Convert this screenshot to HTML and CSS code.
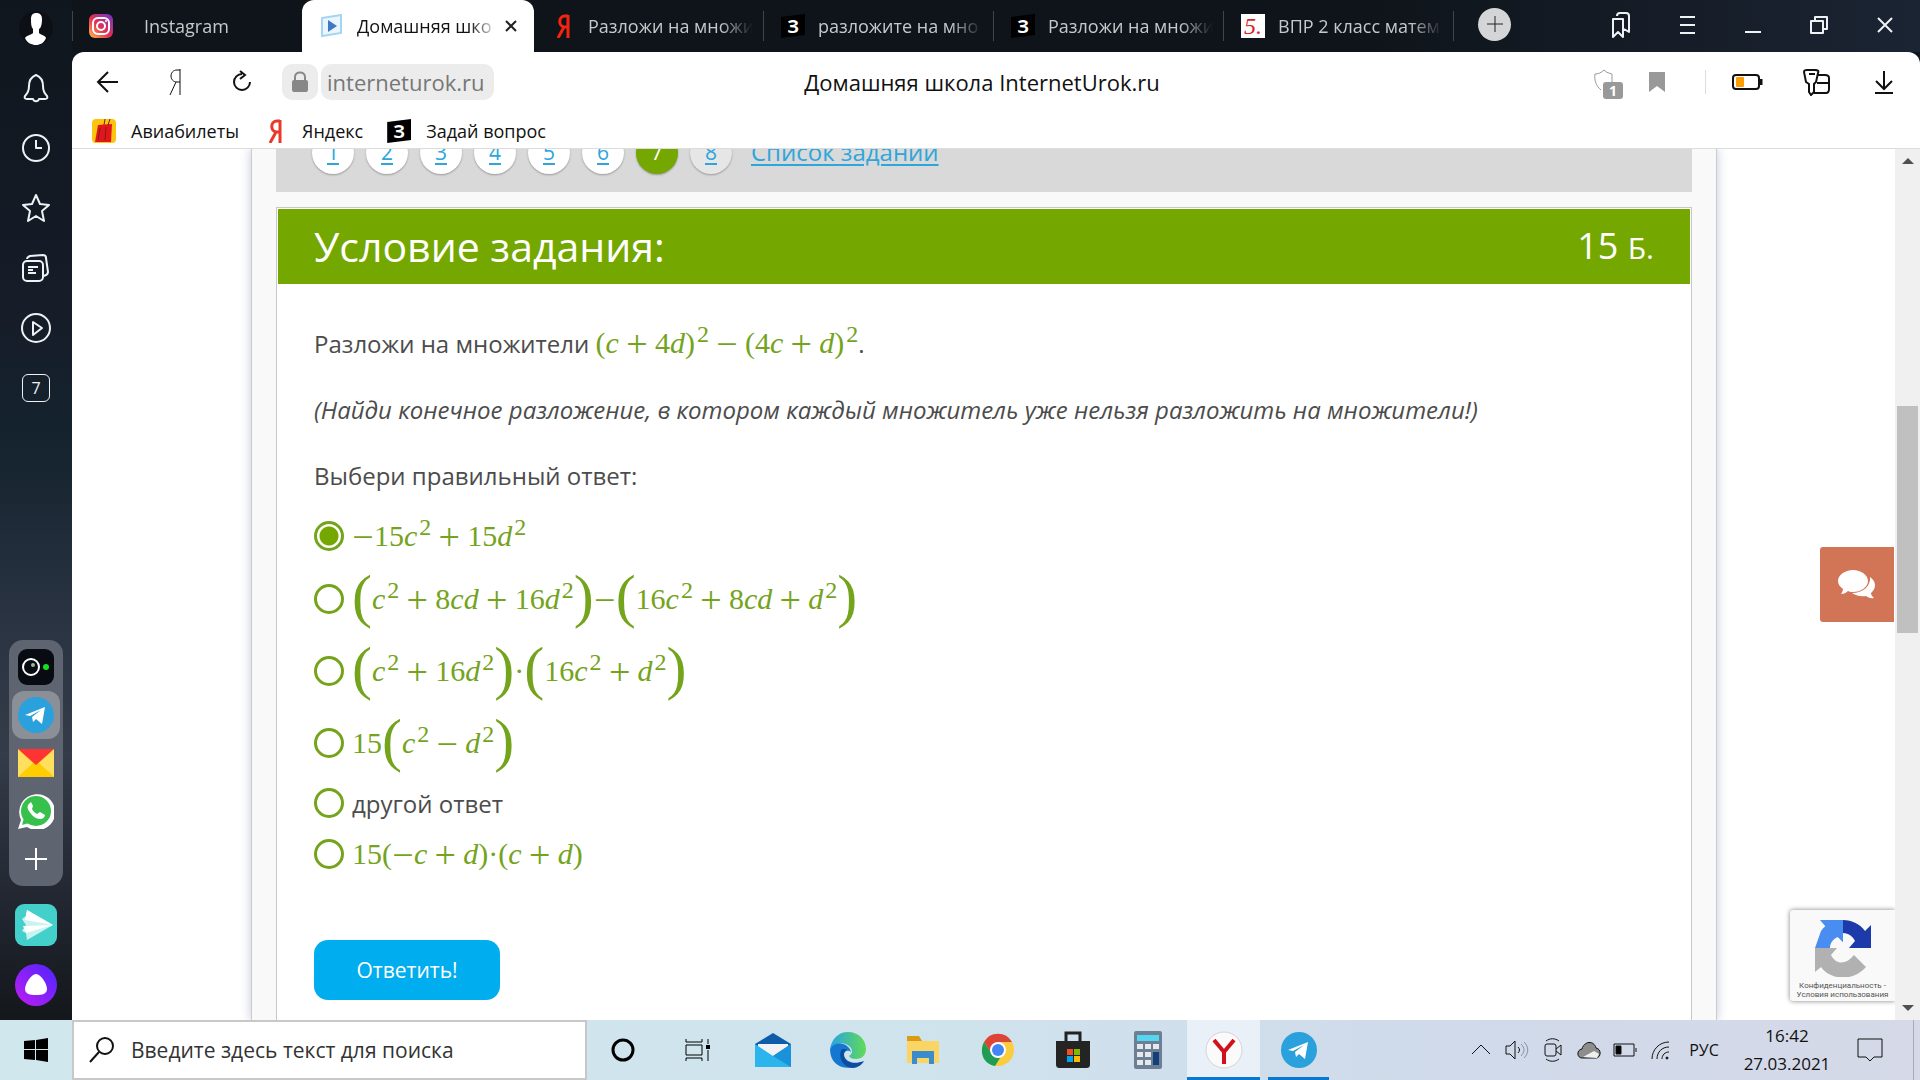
FILE: index.html
```
<!DOCTYPE html>
<html lang="ru">
<head>
  <meta charset="UTF-8" />
  <title>Домашняя школа InternetUrok.ru</title>
  <link rel="stylesheet" href="styles.css">
</head>
<body>
  <aside class="sidebar">
    <nav class="side-nav">
      <button aria-label="Профиль"><svg width="36" height="36" viewBox="0 0 36 36"><circle cx="18" cy="18" r="17" fill="#0c1015"/><path d="M13 9c0-4 2-6 5-6s6 1 6 6c0 5-1 9-3 10v4c2 2 6 2 7 5-2 5-6 7-10 7s-9-2-11-7c2-3 6-3 8-5v-4c-2-2-2-6-2-10z" fill="#fff"/></svg></button>
      <button aria-label="Уведомления"><svg class="line" width="32" height="32" viewBox="0 0 32 32"><path d="M16 3c-5 2-7 6-7 11 0 5-2 8-4 10-1 2 0 3 2 3h6c1 3 5 3 6 0h6c2 0 3-1 2-3-2-2-4-5-4-10 0-5-2-9-7-11z"/></svg></button>
      <button aria-label="История"><svg class="line" width="32" height="32" viewBox="0 0 32 32"><circle cx="16" cy="16" r="13"/><path d="M16 8v8h6"/></svg></button>
      <button aria-label="Избранное"><svg class="line" width="32" height="32" viewBox="0 0 32 32"><path d="M16 3l4 9 9 1-7 6 2 10-8-5-8 5 2-10-7-6 9-1z"/></svg></button>
      <button aria-label="Коллекции"><svg class="line" width="32" height="32" viewBox="0 0 32 32"><rect x="3" y="9" width="20" height="20" rx="4"/><path d="M7 7c0-2 1-2 3-3l13-1c2 0 3 1 3 3l2 14c0 2-1 3-4 4M8 15h10M8 18h5M8 21h8"/></svg></button>
      <button aria-label="Видео"><svg class="line" width="32" height="32" viewBox="0 0 32 32"><circle cx="16" cy="16" r="14"/><path d="M13 10v13l9-7z"/></svg></button>
      <button class="tab-count">7</button>
    </nav>
    <div class="apps">
      <button aria-label="Камера"><svg width="36" height="36" viewBox="0 0 36 36"><rect width="36" height="36" rx="9" fill="#080c12"/><circle cx="13" cy="18" r="8" fill="none" stroke="#fff" stroke-width="2"/><circle cx="15" cy="16" r="2" fill="#9bb893"/><circle cx="28" cy="18" r="3" fill="#12e21c"/></svg></button>
      <button class="current" aria-label="Telegram"><svg width="36" height="36" viewBox="0 0 36 36"><circle cx="18" cy="18" r="18" fill="#2aa1dc"/><path d="M7 18l20-8-3 17-6-5-3 3-1-5 9-7-11 6z" fill="#fff"/></svg></button>
      <button aria-label="Почта"><svg width="36" height="28" viewBox="0 0 36 28"><path d="M0 0h36v28H0z" fill="#fc0"/><path d="M0 0v28l15-14zM36 0v28L21 14z" fill="#ffdf5e"/><path d="M0 0h36L18 16z" fill="#f33"/></svg></button>
      <button aria-label="WhatsApp"><svg width="36" height="36" viewBox="0 0 36 36"><path d="M0 36l3-9A18 18 0 1 1 9 34z" fill="#fff"/><circle cx="18" cy="18" r="15" fill="#38c04c"/><path d="M4 32l2-7 5 5z" fill="#38c04c"/><path d="M12 10c-3 2-3 5-1 8 3 5 7 8 11 8 3 0 5-2 5-4l-5-3-3 2c-2-1-4-3-5-5l1-3-2-4z" fill="#fff"/></svg></button>
      <button aria-label="Добавить"><svg width="24" height="24" viewBox="0 0 24 24"><path d="M12 1v22M1 12h22" stroke="#fff" stroke-width="2"/></svg></button>
    </div>
    <button aria-label="Турбо"><svg width="42" height="42" viewBox="0 0 42 42"><rect width="42" height="42" rx="9" fill="#43d0cb"/><path d="M12 6l26 15-26 15-1-7-4-2 4-6-4-6 4-3z" fill="#c9f3f1"/><path d="M12 6l26 15-28-5zM8 22l30-1-27 8z" fill="#fff"/></svg></button>
    <button aria-label="Алиса"><svg width="42" height="42" viewBox="0 0 42 42"><defs><linearGradient id="alice" x1="0" y1="1" x2="1" y2="0"><stop offset="0" stop-color="#c01df0"/><stop offset="1" stop-color="#4a26ff"/></linearGradient></defs><circle cx="21" cy="21" r="21" fill="url(#alice)"/><path d="M21 10c5 0 11 10 11 15s-5 6-11 6-11-1-11-6 6-15 11-15z" fill="#fff"/></svg></button>
  </aside>

  <div class="browser">
    <header class="tabs">
      <div class="tab wide-gap">
        <svg width="24" height="24" viewBox="0 0 24 24"><defs><linearGradient id="insta" x1="0" y1="1" x2="1" y2="0"><stop offset="0" stop-color="#fdc04d"/><stop offset=".45" stop-color="#e8304f"/><stop offset="1" stop-color="#6a35d0"/></linearGradient></defs><rect width="24" height="24" rx="6" fill="url(#insta)"/><g fill="none" stroke="#fff" stroke-width="2"><rect x="4" y="4" width="16" height="16" rx="5"/><circle cx="12" cy="12" r="4"/></g><circle cx="17" cy="7" r="1" fill="#fff"/></svg>
        <a href="#">Instagram</a>
      </div>
      <div class="tab active">
        <svg width="24" height="24" viewBox="0 0 24 24"><path d="M2 4l19-3v18L2 22z" fill="#eaf6fd" stroke="#a5d5f0" stroke-width="2"/><path d="M8 6v12l9-6z" fill="#3f79c2"/></svg>
        <a href="#">Домашняя шко</a>
        <button class="close" aria-label="Закрыть вкладку"><svg width="12" height="12" viewBox="0 0 12 12"><path d="M1 1l10 10M11 1L1 11" stroke="#222" stroke-width="2"/></svg></button>
      </div>
      <div class="tab">
        <svg width="24" height="24" viewBox="0 0 24 24"><path d="M17 1v23M17 2h-3c-7 0-7 11 0 11h3M13 13L7 24" fill="none" stroke="#f5240e" stroke-width="3"/></svg>
        <a href="#">Разложи на множи</a>
      </div>
      <div class="tab">
        <b class="znania">З</b>
        <a href="#">разложите на мно</a>
      </div>
      <div class="tab">
        <b class="znania">З</b>
        <a href="#">Разложи на множи</a>
      </div>
      <div class="tab">
        <b class="five">5.</b>
        <a href="#">ВПР 2 класс матем</a>
      </div>
      <button class="new-tab" aria-label="Новая вкладка"><svg width="18" height="18" viewBox="0 0 18 18"><path d="M9 1v16M1 9h16" stroke="#222"/></svg></button>
      <div class="window-buttons">
        <button aria-label="Закладки"><svg class="line" width="24" height="28" viewBox="0 0 24 28"><path d="M4 8h10v18l-5-5-5 5zM8 5c0-2 1-3 3-3h6c2 0 3 1 3 3v16l-5-3"/></svg></button>
        <button aria-label="Меню"><svg class="line" width="16" height="20" viewBox="0 0 16 20"><path d="M1 2h15M1 10h15M1 18h15"/></svg></button>
        <button aria-label="Свернуть"><svg class="line" width="16" height="20" viewBox="0 0 16 20"><path d="M0 17h16"/></svg></button>
        <button aria-label="Развернуть"><svg class="line" width="18" height="18" viewBox="0 0 18 18"><path d="M1 5h12v12H1zM5 4V1h12v12h-3"/></svg></button>
        <button aria-label="Закрыть"><svg class="line" width="16" height="16" viewBox="0 0 16 16"><path d="M1 1l14 14M15 1L1 15"/></svg></button>
      </div>
    </header>

    <div class="toolbar">
      <div class="tool-left">
        <button aria-label="Назад"><svg width="24" height="24" viewBox="0 0 24 24"><path d="M22 12H2M12 2L2 12l10 10"/></svg></button>
        <button aria-label="Яндекс"><svg class="thin" width="24" height="28" viewBox="0 0 24 28"><path d="M17 1v26M17 2h-3c-8 0-8 12 0 12h3M13 14L7 27"/></svg></button>
        <button aria-label="Обновить"><svg width="24" height="24" viewBox="0 0 24 24"><path d="M12 4a8 8 0 1 0 8 8M10 1l5 4-5 4"/></svg></button>
        <div class="address">
          <button class="lock" aria-label="Защищённое соединение"><svg width="18" height="22" viewBox="0 0 18 22"><path d="M4 10V6c0-6 10-6 10 0v4" fill="none" stroke="#888"/><rect x="1" y="9" width="16" height="12" rx="2" fill="#888" stroke="none"/></svg></button>
          <a class="host" href="#">interneturok.ru</a>
        </div>
      </div>
      <div class="page-title">Домашняя школа InternetUrok.ru</div>
      <div class="tool-right">
        <div class="shield"><svg class="thin" width="22" height="28" viewBox="0 0 22 28"><path d="M8 22C3 18 1 12 2 6c3 0 6-1 9-4 3 3 5 3 8 4v8" stroke="#999"/></svg><b>1</b></div>
        <button aria-label="В закладки"><svg width="16" height="20" viewBox="0 0 16 20"><path d="M0 0h16v20l-8-6-8 6z" fill="#999" stroke="none"/></svg></button>
        <i class="divider"></i>
        <button aria-label="Батарея"><svg width="32" height="18" viewBox="0 0 32 18"><rect x="1" y="2" width="26" height="14" rx="3"/><rect x="4" y="4" width="8" height="10" rx="1" fill="#ff9d00" stroke="none"/><path d="M29 6v6" stroke-width="3"/></svg></button>
        <button aria-label="Пароли"><svg width="28" height="28" viewBox="0 0 28 28"><path d="M15 7h8c3 0 4 1 4 3v11c0 3-1 4-3 4H12M15 15h12"/><path d="M2 4c0-2 1-2 3-2h8c3 0 4 1 3 3l-2 9-2 2v8l-3 3-2-3v-8l-3-2z" fill="#fff"/><path d="M7 6h6"/></svg></button>
        <button aria-label="Загрузки"><svg width="20" height="24" viewBox="0 0 20 24"><path d="M10 1v17M2 11l8 8 8-8M1 23h18"/></svg></button>
      </div>
    </div>

    <nav class="bookmarks">
      <a href="#"><svg width="24" height="24" viewBox="0 0 24 24"><rect width="24" height="24" rx="4" fill="#fcc40e"/><path d="M6 6l14-1-1 18H3z" fill="#e3151c"/><path d="M12 6l1-6M16 6l2-6M8 9L6 21M14 8l-1 13" stroke="#792016" fill="none"/></svg>Авиабилеты</a>
      <a href="#"><svg width="24" height="24" viewBox="0 0 24 24"><path d="M17 1v23M17 2h-3c-7 0-7 11 0 11h3M13 13L7 24" fill="none" stroke="#e8392a" stroke-width="3"/></svg>Яндекс</a>
      <a href="#"><b class="znania">З</b>Задай вопрос</a>
    </nav>

    <div class="viewport">
      <main class="page">
        <nav class="pager">
          <a href="#">1</a>
          <a href="#">2</a>
          <a href="#">3</a>
          <a href="#">4</a>
          <a href="#">5</a>
          <a href="#">6</a>
          <a class="now" href="#">7</a>
          <a class="next" href="#">8</a>
          <a class="list" href="#">Список заданий</a>
        </nav>

        <form class="task">
          <div class="task-head">
            <h1>Условие задания:</h1>
            <div class="score">15 <small>Б.</small></div>
          </div>
          <div class="task-body">
            <p>Разложи на множители <span class="math">(<i>c</i><b>+</b>4<i>d</i>)<sup>2</sup><b>−</b>(4<i>c</i><b>+</b><i>d</i>)<sup>2</sup></span>.</p>
            <p><em>(Найди конечное разложение, в котором каждый множитель уже нельзя разложить на множители!)</em></p>
            <p>Выбери правильный ответ:</p>

            <label class="answer">
              <input type="radio" name="answer" checked>
              <span class="math"><b class="unary">−</b>15<i>c</i><sup>2</sup><b>+</b>15<i>d</i><sup>2</sup></span>
            </label>
            <label class="answer tall">
              <input type="radio" name="answer">
              <span class="math"><span class="paren">(</span><i>c</i><sup>2</sup><b>+</b>8<i>cd</i><b>+</b>16<i>d</i><sup>2</sup><span class="paren">)</span><b class="unary">−</b><span class="paren">(</span>16<i>c</i><sup>2</sup><b>+</b>8<i>cd</i><b>+</b><i>d</i><sup>2</sup><span class="paren">)</span></span>
            </label>
            <label class="answer tall">
              <input type="radio" name="answer">
              <span class="math"><span class="paren">(</span><i>c</i><sup>2</sup><b>+</b>16<i>d</i><sup>2</sup><span class="paren">)</span>·<span class="paren">(</span>16<i>c</i><sup>2</sup><b>+</b><i>d</i><sup>2</sup><span class="paren">)</span></span>
            </label>
            <label class="answer tall">
              <input type="radio" name="answer">
              <span class="math">15<span class="paren">(</span><i>c</i><sup>2</sup><b>−</b><i>d</i><sup>2</sup><span class="paren">)</span></span>
            </label>
            <label class="answer plain">
              <input type="radio" name="answer">
              <span>другой ответ</span>
            </label>
            <label class="answer">
              <input type="radio" name="answer">
              <span class="math">15(<b class="unary">−</b><i>c</i><b>+</b><i>d</i>)·(<i>c</i><b>+</b><i>d</i>)</span>
            </label>

            <button class="submit" type="submit">Ответить!</button>
          </div>
        </form>
      </main>

      <button class="chat" aria-label="Чат"><svg width="40" height="32" viewBox="0 0 40 32"><path d="M33 8c6 4 7 11 1 16 0 2 1 3 3 5-4 1-6-1-8-2-6 1-11-1-14-3 11 0 19-7 18-16z" fill="#fff"/><path d="M16 1c8 0 15 5 15 11s-7 11-15 11c-2 0-3 0-5-1-2 2-4 3-7 3 1-2 2-3 2-5-3-2-5-5-5-8C1 6 8 1 16 1z" fill="#fff"/></svg></button>

      <div class="recaptcha">
        <svg width="58" height="58" viewBox="0 0 58 58"><path d="M29 1C20 1 12 5 7 12L1 29h15c0-5 3-9 8-11l5 5z" fill="#4a8df0"/><path d="M6 1h23v22l-7-7-10-8z" fill="#4a8df0"/><path d="M29 1c9 0 17 4 22 11l6-6v23H35l6-7c-2-4-6-8-12-8z" fill="#1c3aa9"/><path d="M1 29h22l-6 7c5 10 15 10 23 0l12 12C38 64 15 60 7 48l-6 5z" fill="#b1b1b1"/></svg>
        <div><a href="#">Конфиденциальность</a> -<br><a href="#">Условия использования</a></div>
      </div>

      <div class="scrollbar">
        <svg width="12" height="8" viewBox="0 0 12 8"><path d="M6 1l6 6H0z" fill="#505050"/></svg>
        <div class="track"><i></i></div>
        <svg width="12" height="8" viewBox="0 0 12 8"><path d="M0 1h12L6 7z" fill="#505050"/></svg>
      </div>
    </div>
  </div>

  <footer class="taskbar">
    <button class="start" aria-label="Пуск"><svg width="24" height="24" viewBox="0 0 24 24"><path d="M0 3l11-1v9H0zM12 2l12-2v11H12zM0 12h11v10L0 21zM12 12h12v12l-12-2z"/></svg></button>
    <label class="search">
      <svg width="26" height="26" viewBox="0 0 26 26"><circle cx="16" cy="9" r="8" fill="none" stroke="#111" stroke-width="2"/><path d="M10 15L1 25" stroke="#111" stroke-width="2"/></svg>
      <input type="text" placeholder="Введите здесь текст для поиска">
    </label>
    <div class="programs">
      <button aria-label="Cortana"><svg width="26" height="26" viewBox="0 0 26 26"><circle cx="13" cy="13" r="10" fill="none" stroke="#000" stroke-width="3"/></svg></button>
      <button aria-label="Представление задач"><svg width="26" height="24" viewBox="0 0 26 24"><path d="M1 1v3h16V1M1 23v-3h16v3M1 7h16v10H1zM23 1v5M23 12v11" fill="none" stroke="#000"/><path d="M21 7h4v4h-4z"/></svg></button>
      <button aria-label="Почта"><svg width="38" height="36" viewBox="0 0 38 36"><path d="M1 12L19 1l18 11v6H1z" fill="#0f5cab"/><path d="M4 12h30v14H4z" fill="#f1f1f6"/><path d="M1 12l18 12 18-12v23H1z" fill="#2bb5ec"/><path d="M19 24l18 11V12z" fill="#1992da"/></svg></button>
      <button aria-label="Edge"><svg width="38" height="38" viewBox="0 0 38 38"><defs><linearGradient id="edge"><stop offset="0" stop-color="#26a3e5"/><stop offset="1" stop-color="#62db56"/></linearGradient></defs><path d="M1 18C3 7 10 1 19 1c11 0 18 8 18 17 0 6-4 10-10 10-4 0-6-1-7-3 4-2 4-7 0-10-6-5-15-3-19 3z" fill="url(#edge)"/><path d="M1 18c3-5 8-7 13-5 4 1 7 4 8 8-2-2-7-2-8 4-1 7 7 11 18 6-8 10-31 8-31-13z" fill="#1477d0"/><path d="M13 18c-5 7 1 19 11 19 4 0 9-3 11-7-10 4-19 1-20-6 0-3 1-4 3-6z" fill="#0d4da1"/></svg></button>
      <button aria-label="Проводник"><svg width="36" height="30" viewBox="0 0 36 30"><path d="M2 1h12l3 5H2z" fill="#d99c14"/><path d="M2 6h32v22H2z" fill="#fbd564"/><path d="M7 29V16h22v13h-5v-6H12v6z" fill="#3a8ccd"/></svg></button>
      <button aria-label="Chrome"><svg width="34" height="34" viewBox="0 0 34 34"><circle cx="17" cy="17" r="16" fill="#fbcc3e"/><path d="M3 9a16 16 0 0 1 28 0H17l-6 12z" fill="#dc4538"/><path d="M3 9l8 12 8 4-5 8C2 31-2 19 3 9z" fill="#1f9d54"/><circle cx="17" cy="17" r="8" fill="#fff"/><circle cx="17" cy="17" r="6" fill="#4285f4"/></svg></button>
      <button aria-label="Microsoft Store"><svg width="36" height="38" viewBox="0 0 36 38"><path d="M11 11V2h14v9" fill="none" stroke="#222" stroke-width="3"/><path d="M1 10h34v23c0 3-1 4-4 4H5c-3 0-4-1-4-4z" fill="#242424"/><path d="M12 18h6v6h-6z" fill="#f25022"/><path d="M19 18h6v6h-6z" fill="#7fba00"/><path d="M12 25h6v6h-6z" fill="#00a4ef"/><path d="M19 25h6v6h-6z" fill="#ffb900"/></svg></button>
      <button aria-label="Калькулятор"><svg width="30" height="38" viewBox="0 0 30 38"><rect x="1" width="28" height="38" rx="2" fill="#6d7f92"/><path d="M4 4h22v6H4z" fill="#54d5f2"/><path d="M4 13h6v5H4zM12 13h6v5h-6zM20 13h6v5h-6zM4 21h6v5H4zM12 21h6v5h-6zM4 29h6v5H4zM12 29h6v5h-6z" fill="#e5e9ee"/><path d="M20 21h6v13h-6z" fill="#153f7c"/></svg></button>
      <button class="open front" aria-label="Яндекс.Браузер"><svg width="38" height="38" viewBox="0 0 38 38"><circle cx="19" cy="19" r="18" fill="#fafafa" stroke="#d4d4d8"/><path d="M9 9l10 12L29 9M19 20v13" fill="none" stroke="#d1101c" stroke-width="4"/></svg></button>
      <button class="open" aria-label="Telegram"><svg width="36" height="36" viewBox="0 0 36 36"><circle cx="18" cy="18" r="18" fill="#2aa1dc"/><path d="M7 18l20-8-3 17-6-5-3 3-1-5 9-7-11 6z" fill="#fff"/></svg></button>
    </div>
    <div class="tray">
      <button aria-label="Скрытые значки"><svg width="24" height="24" viewBox="0 0 24 24"><path d="M3 16l9-9 9 9"/></svg></button>
      <button aria-label="Звук"><svg width="24" height="24" viewBox="0 0 24 24"><path d="M1 8h4l5-5v18l-5-5H1zM13 9c2 2 2 4 0 6"/><path d="M16 6c4 4 4 8 0 12M19 4c5 5 5 11 0 16" stroke="#8c929c"/></svg></button>
      <button aria-label="Собрание"><svg width="24" height="24" viewBox="0 0 24 24"><rect x="4" y="6" width="11" height="12" rx="2"/><path d="M15 11l5-4v10l-5-4M5 3c4-3 9-3 13 0M5 21c4 3 9 3 13 0"/></svg></button>
      <button aria-label="OneDrive"><svg width="24" height="18" viewBox="0 0 24 18"><path d="M5 17c-5 0-6-8 0-9 2-8 12-9 14-1 6 1 5 10 0 10z" fill="#8d8d8d"/><path d="M6 16l11-6 5 3-2 4z" fill="#efefef" stroke="none"/></svg></button>
      <button aria-label="Питание"><svg width="24" height="24" viewBox="0 0 24 24"><path d="M1 6h20v12H1zM23 10v4"/><path d="M3 8h5v8H3z" fill="#000"/></svg></button>
      <button aria-label="Сеть"><svg width="24" height="24" viewBox="0 0 24 24"><path d="M3 21C3 12 10 4 20 4M8 21C8 14 13 9 20 9M13 21c0-4 3-7 7-7"/><circle cx="18" cy="20" r="1" fill="#000"/></svg></button>
      <button class="lang">РУС</button>
      <button class="clock">16:42<br>27.03.2021</button>
      <button class="notes" aria-label="Уведомления"><svg width="26" height="26" viewBox="0 0 26 26"><path d="M1 2h24v18h-8l-4 4-4-4H1z"/></svg></button>
    </div>
  </footer>
</body>
</html>
```
FILE: styles.css
```
* {
  box-sizing: border-box;
}

body {
  margin: 0;
  height: 100vh;
  overflow: hidden;
  display: grid;
  grid-template-columns: 72px 1fr;
  grid-template-rows: 1fr 60px;
  font-family: "Open Sans", "Noto Sans", sans-serif;
  color: #111;
  background: #11161d;
}

button {
  display: flex;
  align-items: center;
  justify-content: center;
  padding: 0;
  border: none;
  background: none;
  color: inherit;
  font: inherit;
  cursor: pointer;
}

a {
  color: inherit;
  text-decoration: none;
}

svg {
  display: block;
  flex: none;
}

.line {
  fill: none;
  stroke: #eef2f5;
  stroke-width: 2;
  stroke-linejoin: round;
}

/* left panel */

.sidebar {
  display: flex;
  flex-direction: column;
  align-items: center;
  gap: 18px;
  padding-bottom: 14px;
  background: linear-gradient(#10161d, #161c28 30%, #14232e 43%, #2b3443 62%, #343c49 74%, #20242e 90%, #14171b);
}

.side-nav {
  flex: 1;
}

.side-nav button {
  width: 72px;
  height: 60px;
  padding-bottom: 4px;
}

.side-nav .tab-count {
  width: 28px;
  height: 28px;
  margin: 14px 22px;
  padding: 0;
  border: 1px solid #eef2f5;
  border-radius: 6px;
  color: #eef2f5;
  font-size: 16px;
}

.apps {
  width: 54px;
  padding: 3px;
  border-radius: 14px;
  background: #5f6570;
}

.apps button {
  width: 48px;
  height: 48px;
}

.apps .current {
  border-radius: 12px;
  background: #8b8f97;
}

/* tabs */

.browser {
  display: flex;
  flex-direction: column;
  min-width: 0;
  min-height: 0;
}

.tabs {
  display: flex;
  align-items: center;
  height: 52px;
  background: linear-gradient(90deg, #0f141a 70%, #1b2433);
}

.tab {
  display: flex;
  align-items: center;
  gap: 13px;
  width: 230px;
  height: 30px;
  padding: 0 10px 0 17px;
  border-right: 1px solid #40454b;
  color: #c6c9cc;
  font-size: 18px;
}

.tab a {
  flex: 1;
  overflow: hidden;
  white-space: nowrap;
  mask-image: linear-gradient(90deg, #000 80%, transparent);
}

.tab:first-child {
  border-left: 1px solid #40454b;
  padding-left: 16px;
}

.wide-gap {
  gap: 31px;
  border-right: none;
}

.tab.active {
  width: 232px;
  height: 52px;
  padding: 0 17px 0 18px;
  border: none;
  border-radius: 12px 12px 0 0;
  background: #fff;
  color: #111;
}

.tab .close {
  margin-left: -6px;
}

.znania {
  flex: none;
  width: 24px;
  height: 24px;
  background: #000;
  color: #fff;
  clip-path: polygon(0 12%, 100% 0, 100% 88%, 0 100%);
  font-size: 18px;
  line-height: 24px;
  text-align: center;
}

.five {
  flex: none;
  width: 24px;
  height: 24px;
  background: #fff;
  color: #d8232a;
  font: italic 24px/24px "Liberation Serif", serif;
  text-align: center;
}

.new-tab {
  width: 33px;
  height: 33px;
  margin: 0 0 4px 24px;
  border-radius: 50%;
  background: #d3d5d7;
}

.window-buttons {
  display: flex;
  margin-left: auto;
  padding: 0 2px 2px 0;
}

.window-buttons button {
  width: 66px;
}

/* toolbar */

.toolbar {
  display: grid;
  grid-template-columns: 1fr auto 1fr;
  align-items: center;
  height: 62px;
  padding: 0 2px 2px 2px;
  background: #fff;
  border-radius: 12px 12px 0 0;
  font-size: 22px;
}

.toolbar svg {
  fill: none;
  stroke: #111;
  stroke-width: 2;
}

.toolbar .thin {
  stroke-width: 1;
}

.page-title {
  padding-right: 28px;
}

.tool-left,
.tool-right {
  display: flex;
  align-items: center;
}

.tool-left > button {
  width: 67px;
}

.address {
  display: flex;
  gap: 3px;
  margin-left: 7px;
}

.address > * {
  height: 36px;
  border-radius: 10px;
  background: #ececec;
}

.lock {
  width: 36px;
}

.host {
  padding: 0 10px 0 6px;
  color: #777;
  line-height: 36px;
}

.tool-right {
  justify-content: flex-end;
}

.tool-right > button {
  width: 68px;
}

.shield {
  position: relative;
  width: 30px;
}

.shield b {
  position: absolute;
  right: 0;
  bottom: -3px;
  width: 20px;
  height: 17px;
  border-radius: 3px;
  background: #999;
  color: #fff;
  font-size: 14px;
  line-height: 17px;
  text-align: center;
}

.divider {
  width: 1px;
  height: 24px;
  margin: 0 8px 0 14px;
  background: #ddd;
}

.bookmarks {
  display: flex;
  gap: 24px;
  height: 34px;
  padding: 0 20px;
  background: #fff;
  font-size: 18px;
}

.bookmarks a {
  display: flex;
  align-items: center;
  gap: 15px;
}

/* page */

.viewport {
  flex: 1;
  position: relative;
  min-height: 0;
  overflow: hidden;
  padding: 0 203px 0 179px;
  border-top: 1px solid #dcdcdc;
  background: #fff;
}

.page {
  height: 100%;
  padding: 0 24px;
  border: 1px solid #c9cbd2;
  border-width: 0 1px;
  background: #f9f9fa;
  box-shadow: 0 0 10px rgba(110, 120, 160, 0.4);
}

.pager {
  display: flex;
  align-items: flex-end;
  gap: 12px;
  height: 43px;
  margin-bottom: 15px;
  padding: 0 36px 18px;
  overflow: hidden;
  background: #d9d9d9;
  color: #2da6dc;
  font-size: 21px;
}

.pager a {
  flex: none;
  width: 42px;
  height: 42px;
  border-radius: 50%;
  background: #fff;
  box-shadow: 0 1px 2px rgba(0, 0, 0, 0.3);
  line-height: 40px;
  text-align: center;
  text-decoration: underline;
  text-underline-offset: 3px;
}

.pager .now {
  background: #74a800;
  color: #fff;
  text-decoration: none;
}

.pager .next {
  background: #e6e6e6;
}

.pager .list {
  width: auto;
  margin-left: 7px;
  border-radius: 0;
  background: none;
  box-shadow: none;
  font-size: 24px;
}

.task {
  border: 1px solid #c8c8c8;
  background: #fff;
}

.task-head {
  display: flex;
  align-items: center;
  justify-content: space-between;
  height: 76px;
  padding: 0 36px 2px;
  border: 1px solid #fff;
  border-bottom: none;
  background: #74a800;
  color: #fff;
}

.task-head h1 {
  margin: 0;
  font-size: 41px;
  font-weight: 400;
}

.score {
  font-size: 36px;
}

.score small {
  font-size: 30px;
}

.task-body {
  padding: 27px 37px 60px;
  color: #4c4c4c;
  font-size: 24px;
}

.task-body p {
  margin: 0;
  height: 66px;
  line-height: 66px;
  white-space: nowrap;
}

.math {
  color: #74a31c;
  font: 30px/30px "Liberation Serif", serif;
  white-space: nowrap;
}

.math b {
  display: inline-block;
  width: 24px;
  margin: 0 6px;
  font-size: 38px;
  font-weight: 400;
  line-height: 30px;
  text-align: center;
  vertical-align: -4px;
}

.math .unary {
  width: 22px;
  margin: 0;
}

.math sup {
  margin-left: 2px;
  font-size: 24px;
  line-height: 0;
}

.paren {
  font-size: 60px;
  line-height: 0;
  vertical-align: -7px;
}

.answer {
  display: flex;
  align-items: center;
  gap: 8px;
  height: 54px;
}

.answer.tall {
  height: 72px;
}

.answer.plain {
  height: 48px;
}

.answer input {
  appearance: none;
  width: 30px;
  height: 30px;
  margin: 0;
  border: 3px solid #74a31c;
  border-radius: 50%;
}

.answer input:checked {
  background: radial-gradient(circle, #74a800 9px, #fff 10px);
}

.submit {
  width: 186px;
  height: 60px;
  margin-top: 59px;
  border-radius: 14px;
  background: #00adee;
  color: #fff;
  font-size: 21px;
}

.chat {
  position: absolute;
  top: 398px;
  right: 26px;
  width: 74px;
  height: 75px;
  border-radius: 3px 0 0 3px;
  background: #d27456;
}

.recaptcha {
  position: absolute;
  right: 25px;
  bottom: 19px;
  display: flex;
  flex-direction: column;
  align-items: center;
  width: 105px;
  height: 91px;
  padding-top: 9px;
  border-radius: 3px 0 0 3px;
  background: #f9f9f9;
  box-shadow: 0 0 5px #808080;
  color: #555;
  font: 8px/9px Roboto, sans-serif;
  text-align: center;
}

.recaptcha div {
  margin-top: 4px;
}

.scrollbar {
  position: absolute;
  top: 0;
  right: 0;
  bottom: 0;
  display: flex;
  flex-direction: column;
  align-items: center;
  width: 25px;
  padding: 8px 0;
  background: #f0f0f0;
}

.track {
  flex: 1;
  width: 21px;
  padding-top: 241px;
}

.track i {
  display: block;
  height: 227px;
  background: #c0c0c0;
}

/* taskbar */

.taskbar {
  grid-column: 1 / 3;
  display: flex;
  background: linear-gradient(90deg, #d0e7ee, #cfe3ed 50%, #d0daea 75%, #d5d9e8);
}

.start {
  width: 72px;
}

.search {
  display: flex;
  align-items: center;
  gap: 14px;
  width: 515px;
  padding-left: 15px;
  border: 2px solid #c8c8c8;
  background: #fff;
}

.search input {
  flex: 1;
  border: none;
  outline: none;
  background: none;
  font: 21px "Open Sans", sans-serif;
}

.search input::placeholder {
  color: #333;
  opacity: 1;
}

.programs {
  display: flex;
}

.programs button {
  width: 75px;
  padding-right: 3px;
}

.programs .open {
  width: 61px;
  padding: 0;
  border-bottom: 3px solid #0a78cf;
  border-top: 3px solid transparent;
  margin-left: 8px;
}

.programs .front {
  width: 73px;
  margin-left: 0;
  border-top-color: #eaf0f8;
  background: #eaf0f8;
}

.tray {
  display: flex;
  align-items: center;
  margin-left: auto;
  padding-right: 6px;
}

.tray > button {
  width: 36px;
}

.tray svg {
  fill: none;
  stroke: #111;
}

.tray .lang {
  width: 50px;
  font-size: 16px;
}

.tray .clock {
  width: 110px;
  margin-left: 3px;
  font-size: 17px;
  line-height: 28px;
}

.tray .notes {
  width: 72px;
  height: 60px;
  border-right: 1px solid #a5abb8;
  padding-right: 15px;
}
```
